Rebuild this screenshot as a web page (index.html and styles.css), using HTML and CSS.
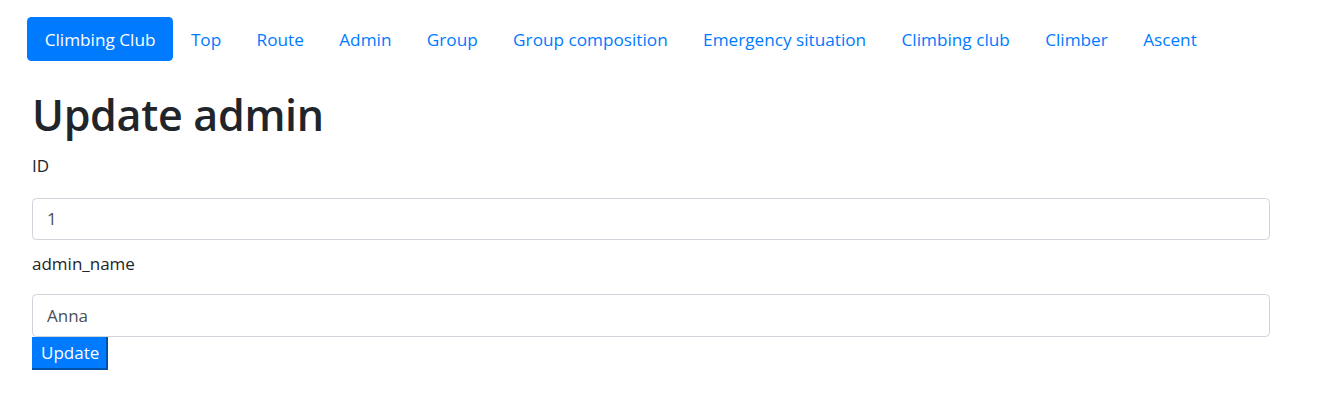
FILE: index.html
```html
<!DOCTYPE html>
<html lang="en">
<head>
<meta charset="utf-8">
<title>Update admin</title>
<link rel="stylesheet" href="styles.css">
</head>
<body>
<nav class="nav">
  <a class="nav-link active" href="#">Climbing Club</a>
  <a class="nav-link" href="#">Top</a>
  <a class="nav-link" href="#">Route</a>
  <a class="nav-link" href="#">Admin</a>
  <a class="nav-link" href="#">Group</a>
  <a class="nav-link" href="#">Group composition</a>
  <a class="nav-link" href="#">Emergency situation</a>
  <a class="nav-link" href="#">Climbing club</a>
  <a class="nav-link" href="#">Climber</a>
  <a class="nav-link" href="#">Ascent</a>
</nav>
<main class="content">
  <h1 class="title">Update admin</h1>
  <form class="form">
    <label class="label label-first" for="id">ID</label>
    <input class="field" id="id" type="text" value="1">
    <label class="label label-second" for="name">admin_name</label>
    <input class="field" id="name" type="text" value="Anna">
    <button class="btn" type="button">Update</button>
  </form>
</main>
</body>
</html>
```

FILE: styles.css
```css
* { box-sizing: border-box; }
html, body {
  margin: 0;
  padding: 0;
  background: #fff;
}
body {
  font-family: "Open Sans", "Noto Sans", sans-serif;
  font-size: 17px;
  line-height: 26.4px;
  color: #212529;
}
.nav {
  display: flex;
  padding: 17px 0 0 27px;
  font-size: 17.2px;
}
.nav-link {
  display: block;
  height: 44px;
  padding: 9.8px 17.7px 7.8px 17.7px;
  color: #007bff;
  text-decoration: none;
  border-radius: 4.4px;
  white-space: nowrap;
}
.nav-link.active {
  background: #007bff;
  color: #fff;
}
.content {
  padding-left: 32px;
  width: 1270px;
}
.title {
  margin: 28px 0 8.8px 0;
  font-size: 43px;
  line-height: 52.8px;
  font-weight: 600;
  letter-spacing: -0.3px;
}
.form {
  display: flex;
  flex-direction: column;
  align-items: flex-start;
}
.label {
  display: block;
}
.label-first {
  margin: 2px 0 18.6px 0;
}
.label-second {
  margin: 11px 0 16.6px 0;
}
.field {
  display: block;
  width: 1238px;
  height: 42.5px;
  padding: 0 14px;
  font-family: inherit;
  font-size: 17px;
  color: #495057;
  border: 1px solid #ced4da;
  border-radius: 4.4px;
  background: #fff;
  outline: none;
}
.btn {
  font-family: inherit;
  font-size: 17px;
  line-height: 26.4px;
  color: #fff;
  background: #007bff;
  border: 0;
  border-right: 2px solid #0052a8;
  border-bottom: 2px solid #0052a8;
  padding: 3px 7px 1px 9px;
  height: 33px;
  width: 76px;
  border-radius: 0;
  white-space: nowrap;
}
```
